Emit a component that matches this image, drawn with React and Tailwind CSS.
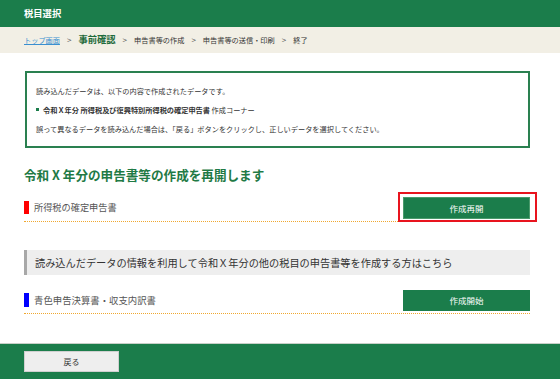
import React from "react";

const font = { fontFamily: '"Noto Sans CJK JP", "Noto Sans", sans-serif' };

function Sep() {
  return <span className="text-[8px] text-[#555] mx-[7px]">&gt;</span>;
}

export default function App() {
  return (
    <div className="w-[560px] h-[379px] flex flex-col bg-white overflow-hidden font-['Noto_Sans_CJK_JP',sans-serif]" style={font}>
      <div className="h-[27px] shrink-0 bg-[#1b7d4b] flex items-center px-[24px]">
        <span className="text-white font-bold text-[9.3px]">税目選択</span>
      </div>
      <div className="h-[26px] shrink-0 bg-[#f2efe5] flex items-center px-[24px] text-[7.2px] text-[#333]">
        <span className="text-[#3a8fd0] underline">トップ画面</span>
        <Sep />
        <span className="text-[#1f6b3c] font-bold text-[9.3px]">事前確認</span>
        <Sep />
        <span>申告書等の作成</span>
        <Sep />
        <span>申告書等の送信・印刷</span>
        <Sep />
        <span>終了</span>
      </div>
      <div className="flex-1 flex flex-col pl-[24px] pr-[30px]">
        <div className="mt-[18px] ml-[1px] h-[77px] border-2 border-[#2a8050] flex flex-col justify-center gap-[9px] pl-[9px] text-[7.2px] text-[#333] leading-[10px]">
          <div>読み込んだデータは、以下の内容で作成されたデータです。</div>
          <div className="flex items-center">
            <span className="inline-block w-[3px] h-[3px] bg-[#1b7d4b] mr-[4px]"></span>
            <span className="font-bold">令和Ｘ年分 所得税及び復興特別所得税の確定申告書</span>
            <span>&nbsp;作成コーナー</span>
          </div>
          <div>誤って異なるデータを読み込んだ場合は、「戻る」ボタンをクリックし、正しいデータを選択してください。</div>
        </div>
        <div className="mt-[19px] text-[12.6px] font-bold text-[#1f7a45] leading-[16px]">令和 X 年分の申告書等の作成を再開します</div>
        <div className="mt-[14px] flex items-center justify-between border-b border-dotted border-[#f0a830] pb-[2px]">
          <div className="flex items-center">
            <span className="w-[5px] h-[13px] bg-[#ff0000] mr-[5px]"></span>
            <span className="text-[9.2px] text-[#555]">所得税の確定申告書</span>
          </div>
          <div className="-mt-[5px] -mb-[3px] -mr-[7px] border-2 border-[#e8141e] bg-white pl-[3px] pr-[5px] pt-[3px] pb-[1px] flex">
            <button className="w-[127px] h-[22px] bg-[#1b7d4b] text-white text-[8.5px] border border-[#4a9a6c]">作成再開</button>
          </div>
        </div>
        <div className="mt-[28px] h-[25px] bg-[#eeeeee] border-l-[3px] border-[#a8a8a8] flex items-center pl-[8px] text-[10.2px] text-[#333]">
          読み込んだデータの情報を利用して令和Ｘ年分の他の税目の申告書等を作成する方はこちら
        </div>
        <div className="mt-[15px] flex items-center justify-between border-b border-dotted border-[#f0a830] pb-[2px]">
          <div className="flex items-center">
            <span className="w-[5px] h-[14px] bg-[#0000ff] mr-[5px]"></span>
            <span className="text-[9.4px] text-[#555]">青色申告決算書・収支内訳書</span>
          </div>
          <button className="w-[127px] h-[21px] bg-[#1b7d4b] text-white text-[8.5px]">作成開始</button>
        </div>
      </div>
      <div className="h-[36px] shrink-0 bg-[#1b7d4b] border-t border-[#c8d0c8] flex items-center px-[24px]">
        <button className="w-[95px] h-[21px] bg-[#eeeeee] border border-[#d0d0d0] text-[8px] text-[#333]">戻る</button>
      </div>
    </div>
  );
}
